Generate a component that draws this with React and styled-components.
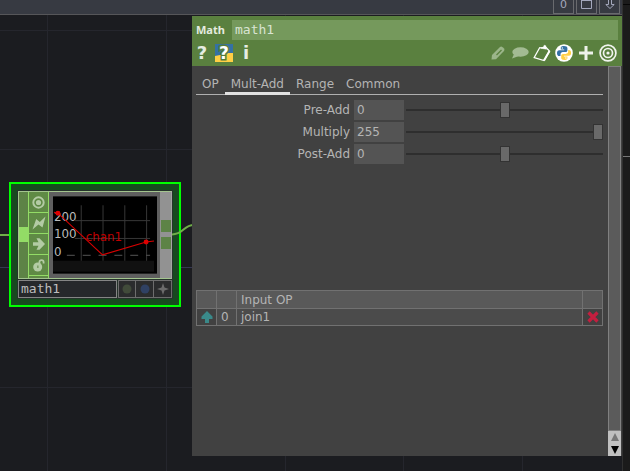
import React, { useState } from "react";
import styled, { createGlobalStyle, css } from "styled-components";

const sans = '"DejaVu Sans", Verdana, sans-serif';
const mono = '"DejaVu Sans Mono", monospace';

const GlobalStyle = createGlobalStyle`
  *, *::before, *::after { box-sizing: border-box; }
  body { margin: 0; background: #1b1c20; font: 12px/16px ${sans}; color: #b4b4b4; overflow: hidden; }
  button, input { font: inherit; color: inherit; margin: 0; padding: 0; border: 0; background: none; border-radius: 0; }
  svg { display: block; }
`;

const Desktop = styled.div`
  display: grid;
  grid-template-columns: 1fr 8px;
  min-height: 100vh;
`;

const Pane = styled.div`
  display: flex;
  flex-direction: column;
  min-width: 0;
`;

const SidePane = styled.div`
  background: #1b1b1b;
  border-left: 1px solid #303030;
  padding-top: 4px;
`;

const SideLine = styled.div`
  height: 1px;
  background: ${(p) => (p.$bright ? "#777" : "#060606")};
  margin-bottom: 151px;
`;

const TopBar = styled.div`
  height: 15px;
  flex: none;
  display: flex;
  justify-content: flex-end;
  gap: 2px;
  padding: 0 2px 0 0;
  background: #373a42;
  border-bottom: 1px solid #565659;
`;

const PaneButton = styled.button`
  width: 21px;
  height: 14px;
  display: flex;
  justify-content: center;
  border: 1px solid #696a6e;
  border-top: 0;
  color: #a4a8bd;
  && { font-size: 11px; line-height: 10px; }
`;

const Network = styled.div`
  flex: 1;
  position: relative;
  display: grid;
  grid-template-columns: 192px 1fr;
  padding: 1px 0 15px;
`;

const Wires = styled.svg`
  position: absolute;
  inset: 0;
  width: 100%;
  height: 100%;
`;

const Node = styled.section`
  position: absolute;
  left: 9px;
  top: 167px;
  width: 172px;
  padding: 6px;
  border: 2px solid #00ff00;
  background: #174a1f;
`;

const NodeInner = styled.div`
  display: grid;
  grid-template-columns: minmax(0, 1fr);
  gap: 1px;
  padding: 1px;
  background: #25332b;
`;

const NodeBody = styled.div`
  display: flex;
  height: 88px;
  border: 1px solid #a3c48e;
  border-right-color: #a5a5a5;
  background: #5f5f5f;
`;

const InputRail = styled.div`
  flex: none;
  width: 9px;
  padding-top: 35px;
  background: #5d8346;
`;

const InputPort = styled.div`
  height: 15px;
  background: #93dc66;
`;

const Flags = styled.div`
  flex: none;
  width: 21px;
  display: flex;
  flex-direction: column;
  background: #5f8a45;
  border-left: 1px solid #93dc66;
  border-right: 1px solid #93dc66;
`;

const Flag = styled.button`
  height: 21px;
  flex: none;
  display: grid;
  place-items: center;
  border-bottom: 1px solid #93dc66;
`;

const Viewer = styled.div`
  flex: 1;
  min-width: 0;
  padding: 4px 3px 4px 4px;
`;

const OutputRail = styled.div`
  flex: none;
  width: 11px;
  display: flex;
  flex-direction: column;
  gap: 5px;
  padding: 28px 0 0 1px;
  background: #929292;
`;

const OutputPort = styled.div`
  height: 12px;
  background: #5d8346;
`;

const NodeFooter = styled.div`
  display: flex;
  height: 18px;
  gap: 1px;
`;

const NodeName = styled.input`
  flex: 1;
  min-width: 0;
  && { font: 13px/16px ${mono}; }
  padding-left: 2px;
  color: #bdbdbd;
  background: #26282b;
  border: 1px solid #858585;
`;

const NodeToggles = styled.div`
  display: flex;
`;

const NodeToggle = styled.button`
  width: 18px;
  display: grid;
  place-items: center;
  background: #2b2c2d;
  border: 1px solid #6d6d6d;
  & + & { border-left: 0; }
`;

const Dialog = styled.section`
  position: relative;
  grid-column: 2;
  display: flex;
  flex-direction: column;
  min-width: 0;
  background: #414141;
`;

const Header = styled.header`
  background: #5a803f;
  padding: 4px 4px 2px;
`;

const TitleRow = styled.label`
  display: flex;
  align-items: center;
`;

const OpType = styled.span`
  width: 36px;
  font: bold 11px/16px "Noto Sans", ${sans};
  color: #e4ebdf;
`;

const OpName = styled.input`
  flex: 1;
  min-width: 0;
  height: 20px;
  padding: 0 3px;
  && { font: 13px/20px ${mono}; }
  color: #d9e4d2;
  background: #75995c;
`;

const Tools = styled.div`
  display: flex;
  justify-content: space-between;
  height: 22px;
  margin-top: 2px;
`;

const ToolGroup = styled.div`
  display: flex;
  align-items: center;
  gap: 2px;
`;

const Tool = styled.button`
  width: 20px;
  height: 20px;
  display: grid;
  place-items: center;
  color: #e6ece2;
  && { font: bold 18px/20px ${sans}; }
`;

const HelpGroup = styled(ToolGroup)`
  margin-left: -4px;
`;

const Content = styled.div`
  flex: 1;
  display: flex;
`;

const Parameters = styled.div`
  flex: 1;
  min-width: 0;
  display: flex;
  flex-direction: column;
  padding: 10px 5px 0 4px;
`;

const TabBar = styled.div`
  display: flex;
  border-bottom: 1px solid #b0b0b0;
  margin-bottom: 5px;
`;

const Tab = styled.button`
  height: 19px;
  padding: 0 6px;
  margin-bottom: -1px;
  border-bottom: 3px solid transparent;
  ${(p) => p.$active && css`border-bottom-color: #e2e2e2;`}
`;

const ParamRow = styled.div`
  display: grid;
  grid-template-columns: 158px 50px 1fr;
  align-items: center;
  height: 20px;
  margin-bottom: 2px;
`;

const ParamLabel = styled.label`
  padding-right: 4px;
  text-align: right;
`;

const ParamField = styled.input`
  width: 50px;
  height: 20px;
  padding: 0 3px;
  background: #545454;
`;

const Slider = styled.input`
  appearance: none;
  width: auto;
  min-width: 0;
  height: 18px;
  margin-left: 2px;
  &&::-webkit-slider-runnable-track {
    height: 2px;
    background: #2e2e2e;
  }
  &&::-webkit-slider-thumb {
    appearance: none;
    width: 10px;
    height: 16px;
    margin-top: -7px;
    background: #696969;
    border: 1px solid #333;
  }
`;

const Inputs = styled.table`
  width: 100%;
  margin-top: 124px;
  border-collapse: collapse;
  table-layout: fixed;
`;

const Cell = styled.td`
  height: 17px;
  padding: 0 4px;
  border: 1px solid #717171;
  background: ${(p) => (p.$dark ? "#414141" : "#4b4b4b")};
  line-height: 16px;
`;

const HeadCell = styled.th`
  height: 18px;
  padding: 0 4px;
  border: 1px solid #717171;
  background: #595959;
  font-weight: normal;
  text-align: left;
  line-height: 16px;
`;

const CellButton = styled.button`
  display: grid;
  place-items: center;
  width: 100%;
  height: 14px;
`;

const ScrollBar = styled.div`
  width: 13px;
  display: flex;
  flex-direction: column;
  margin: 0 1px 0 0;
`;

const ScrollThumb = styled.div`
  flex: 1;
  background: #5b5b5b;
  border: 1px solid #808080;
`;

const ScrollArrows = styled.div`
  height: 25px;
  display: grid;
  background: #c0c0c0;
`;

const ArrowButton = styled.button`
  display: grid;
  place-items: center;
`;

const Target = ({ size, color, width = 2 }) => (
  <svg width={size} height={size} viewBox="0 0 18 18" fill="none" stroke={color} strokeWidth={width}>
    <circle cx="9" cy="9" r="7.9" />
    <circle cx="9" cy="9" r="4.5" />
    <circle cx="9" cy="9" r="1.6" fill={color} stroke="none" />
  </svg>
);

const ViewerFlag = () => (
  <svg width="13" height="13" viewBox="0 0 12 12">
    <circle cx="6" cy="6" r="4.8" fill="none" stroke="#b3cba4" strokeWidth="1.8" />
    <circle cx="6" cy="6" r="2.4" fill="#b3cba4" />
  </svg>
);

const BoltFlag = () => (
  <svg width="14" height="14" viewBox="0 0 14 14" fill="#b3cba4">
    <path d="M.5 13.500 4.200 3 7.800 6 13.500.5 10.500 11.500 6.500 8.500Z" />
  </svg>
);

const ArrowFlag = () => (
  <svg width="14" height="14" viewBox="0 0 14 14" fill="#b3cba4">
    <path d="M1 5.300H6.500L4.500 1.200H7.500L13 7 7.500 12.800H4.500L6.500 8.700H1Z" />
  </svg>
);

const LockFlag = () => (
  <svg width="14" height="14" viewBox="0 0 14 14">
    <circle cx="5.700" cy="9" r="4.500" fill="#b3cba4" />
    <path d="M7.400 6.500V4.200a2.100 2.100 0 0 1 4.200 0V5.500" fill="none" stroke="#b3cba4" strokeWidth="1.800" />
    <path d="M5.200 7.500h1.300v2.500H5.200z" fill="#6f9557" />
  </svg>
);

const ChannelGraph = () => (
  <svg width="100%" height="78" viewBox="0 0 105 78" aria-label="chan1">
    <rect width="105" height="78" fill="#000" />
    <rect y="65" width="102" height="11" fill="#111" />
    <g stroke="#383838" strokeWidth="1">
      <path d="M28.500 9v56M50.500 9v56M72.500 9v56M94.500 9v56M22 24.500h76M22 42.500h76" />
      <path d="M14 59.500h84" strokeDasharray="8 8" stroke="#555" />
    </g>
    <g fontFamily="DejaVu Sans" fontSize="12" fill="#bcbcbc">
      <text x="1" y="25">200</text>
      <text x="1" y="42">100</text>
      <text x="1" y="60">0</text>
    </g>
    <text x="33" y="45" fontFamily="DejaVu Sans" fontSize="12" fill="#c00000">chan1</text>
    <path d="M1 16 5 17 50 59 94 46 102 45" fill="none" stroke="#d90000" strokeWidth="1.100" />
    <circle cx="5" cy="17" r="2.500" fill="#e00000" />
    <circle cx="94" cy="46" r="2.500" fill="#e00000" />
  </svg>
);

const PythonLogo = () => (
  <svg width="18" height="18" viewBox="0 0 18 18">
    <circle cx="9" cy="9" r="8.800" fill="#fff" />
    <path d="M8.800 2C6 2 5.800 3.200 5.800 4v1.400h3.400v.8H4.300C2.800 6.200 2 7.400 2 9.200s.9 2.900 2.200 2.900h1.300v-1.700c0-1.300 1-2.300 2.300-2.300h2.900c1 0 1.700-.8 1.700-1.800V4c0-1.300-1.200-2-3.600-2Z" fill="#3571a5" />
    <path d="M9.400 16c2.800 0 3-1.200 3-2v-1.400H9v-.8h4.900c1.500 0 2.200-1.200 2.200-3s-.9-2.900-2.200-2.900h-.7v1.700c0 1.300-1 2.300-2.300 2.300H8c-1 0-1.800.8-1.800 1.800V14c0 1.300 1.100 2 3.200 2Z" fill="#ffcf45" />
    <circle cx="7.300" cy="4" r=".7" fill="#fff" />
    <circle cx="10.900" cy="14" r=".7" fill="#fff" />
  </svg>
);

const PythonHelp = () => (
  <svg width="18" height="18" viewBox="0 0 18 18">
    <rect width="18" height="18" fill="#ffcf45" />
    <path d="M0 0h18v9h-5l-3 2H5L0 12Z" fill="#3571a5" />
    <text x="9" y="15" textAnchor="middle" fontFamily="DejaVu Sans" fontWeight="bold" fontSize="17" fill="none" stroke="#547b3b" strokeWidth="3" aria-hidden="true">?</text>
    <text x="9" y="15" textAnchor="middle" fontFamily="DejaVu Sans" fontWeight="bold" fontSize="17" fill="#fff">?</text>
  </svg>
);

const Pencil = () => (
  <svg width="14" height="14" viewBox="0 0 14 14">
    <path d="M.5 13.500 1 9 9 .9q1.200-.9 2.600.3l1.400 1.400q1 1.200 0 2.400L5 13.200Z" fill="#9bb58a" />
    <path d="M5.500 9 10.500 4" stroke="#5a803f" strokeWidth="1.200" />
  </svg>
);

const Bubble = () => (
  <svg width="18" height="14" viewBox="0 0 18 14" fill="#a3bb93">
    <ellipse cx="9.500" cy="6" rx="8.200" ry="4.700" />
    <path d="M3 8 1 12.500 8 10Z" />
  </svg>
);

const Clipboard = () => (
  <svg width="18" height="18" viewBox="0 0 18 18" fill="none" stroke="#fff">
    <path d="M6.500 4 1.200 13.500 11 16.500 16.500 7 13.500 4" strokeWidth="1.300" />
    <path d="M6 3.700h8" strokeWidth="1" />
    <path d="M16.500 7 11 16.500" strokeWidth="2" />
    <path d="M7.500 4.200 10.500 3 11.200 1.200 12.800 1.800 13.500 5.200Z" fill="#fff" strokeWidth=".5" />
  </svg>
);

const Plus = () => (
  <svg width="14" height="14" viewBox="0 0 14 14">
    <path d="M7 0v14M0 7h14" stroke="#edf1ea" strokeWidth="3" />
  </svg>
);

const PARAMS = [
  { id: "preadd", label: "Pre-Add", value: "0", position: 50 },
  { id: "multiply", label: "Multiply", value: "255", position: 100 },
  { id: "postadd", label: "Post-Add", value: "0", position: 50 },
];

const TABS = ["OP", "Mult-Add", "Range", "Common"];

function MathNode() {
  return (
    <Node aria-label="math1 node">
      <NodeInner>
        <NodeBody>
          <InputRail><InputPort /></InputRail>
          <Flags>
            <Flag aria-label="Viewer active"><ViewerFlag /></Flag>
            <Flag aria-label="Cook"><BoltFlag /></Flag>
            <Flag aria-label="Bypass"><ArrowFlag /></Flag>
            <Flag aria-label="Lock"><LockFlag /></Flag>
          </Flags>
          <Viewer><ChannelGraph /></Viewer>
          <OutputRail><OutputPort /><OutputPort /></OutputRail>
        </NodeBody>
        <NodeFooter>
          <NodeName aria-label="Node name" defaultValue="math1" />
          <NodeToggles>
            <NodeToggle aria-label="Display">
              <svg width="10" height="10"><circle cx="5" cy="5" r="4.500" fill="#414b3a" /></svg>
            </NodeToggle>
            <NodeToggle aria-label="Render">
              <svg width="10" height="10"><circle cx="5" cy="5" r="4.500" fill="#2f4163" /></svg>
            </NodeToggle>
            <NodeToggle aria-label="Activate viewer">
              <svg width="12" height="12" viewBox="0 0 12 12"><path d="M6 0 7.500 4.500 12 6 7.500 7.500 6 12 4.500 7.500 0 6 4.500 4.500Z" fill="#6b6b6b" /></svg>
            </NodeToggle>
          </NodeToggles>
        </NodeFooter>
      </NodeInner>
    </Node>
  );
}

function ParameterDialog() {
  const [tab, setTab] = useState("Mult-Add");
  return (
    <Dialog aria-label="Math parameters">
      <Header>
        <TitleRow>
          <OpType>Math</OpType>
          <OpName defaultValue="math1" />
        </TitleRow>
        <Tools>
          <HelpGroup>
            <Tool aria-label="Help">?</Tool>
            <Tool aria-label="Python help"><PythonHelp /></Tool>
            <Tool aria-label="Info">i</Tool>
          </HelpGroup>
          <ToolGroup>
            <Tool aria-label="Edit"><Pencil /></Tool>
            <Tool aria-label="Comment"><Bubble /></Tool>
            <Tool aria-label="Copy parameters"><Clipboard /></Tool>
            <Tool aria-label="Language"><PythonLogo /></Tool>
            <Tool aria-label="Add"><Plus /></Tool>
            <Tool aria-label="Filter"><Target size={18} color="#f1f4ef" width={1.7} /></Tool>
          </ToolGroup>
        </Tools>
      </Header>
      <Content>
        <Parameters>
          <TabBar role="tablist">
            {TABS.map((name) => (
              <Tab key={name} role="tab" aria-selected={tab === name} $active={tab === name} onClick={() => setTab(name)}>
                {name}
              </Tab>
            ))}
          </TabBar>
          {PARAMS.map((p) => (
            <ParamRow key={p.id}>
              <ParamLabel htmlFor={p.id}>{p.label}</ParamLabel>
              <ParamField id={p.id} defaultValue={p.value} />
              <Slider type="range" min="0" max="100" defaultValue={p.position} aria-label={p.label} />
            </ParamRow>
          ))}
          <Inputs>
            <colgroup>
              <col width="20" />
              <col width="20" />
              <col />
              <col width="20" />
            </colgroup>
            <thead>
              <tr>
                <HeadCell />
                <HeadCell />
                <HeadCell>Input OP</HeadCell>
                <HeadCell />
              </tr>
            </thead>
            <tbody>
              <tr>
                <Cell $dark>
                  <CellButton aria-label="Move up">
                    <svg width="12" height="12" viewBox="0 0 12 12" fill="#3a8989"><path d="M6 0 11.500 5.500V8H8v4H4V8H.5V5.500Z" /></svg>
                  </CellButton>
                </Cell>
                <Cell>0</Cell>
                <Cell>join1</Cell>
                <Cell $dark>
                  <CellButton aria-label="Remove">
                    <svg width="12" height="12" viewBox="0 0 12 12"><path d="M1.500 1.500 10.500 10.500M10.500 1.500 1.500 10.500" stroke="#c41e3f" strokeWidth="3.200" /></svg>
                  </CellButton>
                </Cell>
              </tr>
            </tbody>
          </Inputs>
        </Parameters>
        <ScrollBar>
          <ScrollThumb />
          <ScrollArrows>
            <ArrowButton aria-label="Scroll up">
              <svg width="8" height="8"><path d="M4 0 8 8H0Z" fill="#777" /></svg>
            </ArrowButton>
            <ArrowButton aria-label="Scroll down">
              <svg width="8" height="8"><path d="M0 0H8L4 8Z" fill="#000" /></svg>
            </ArrowButton>
          </ScrollArrows>
        </ScrollBar>
      </Content>
    </Dialog>
  );
}

export default function App() {
  return (
    <>
      <GlobalStyle />
      <Desktop>
        <Pane>
          <TopBar>
            <PaneButton>0</PaneButton>
            <PaneButton aria-label="Maximize">
              <svg width="11" height="9"><path d="M.5 0v8.500h10V0M0 .5h11" fill="none" stroke="#a4a8bd" /></svg>
            </PaneButton>
            <PaneButton aria-label="Pane menu">
              <svg width="10" height="9"><path d="M3.500 0v4.500H.8L5 8.500 9.200 4.500H6.500V0" fill="none" stroke="#a4a8bd" /></svg>
            </PaneButton>
          </TopBar>
          <Network>
            <Wires>
              <path d="M47.500 0V456M166.500 0V456M285.500 0V456M403.500 0V456M522.500 0V456" stroke="#25262d" />
              <path d="M0 15.500H192M0 134.500H192M0 372.500H192" stroke="#25262d" />
              <path d="M0 252.500H192" stroke="#363753" />
              <path d="M0 220H18" fill="none" stroke="#6fae48" strokeWidth="2" />
            </Wires>
            <MathNode />
            <Wires as="svg" pointerEvents="none">
              <path d="M172 219.500C184 219.500 183 210 194 210" fill="none" stroke="#6fae48" strokeWidth="2" />
            </Wires>
            <ParameterDialog />
          </Network>
        </Pane>
        <SidePane>
          <SideLine />
          <SideLine $bright />
        </SidePane>
      </Desktop>
    </>
  );
}
